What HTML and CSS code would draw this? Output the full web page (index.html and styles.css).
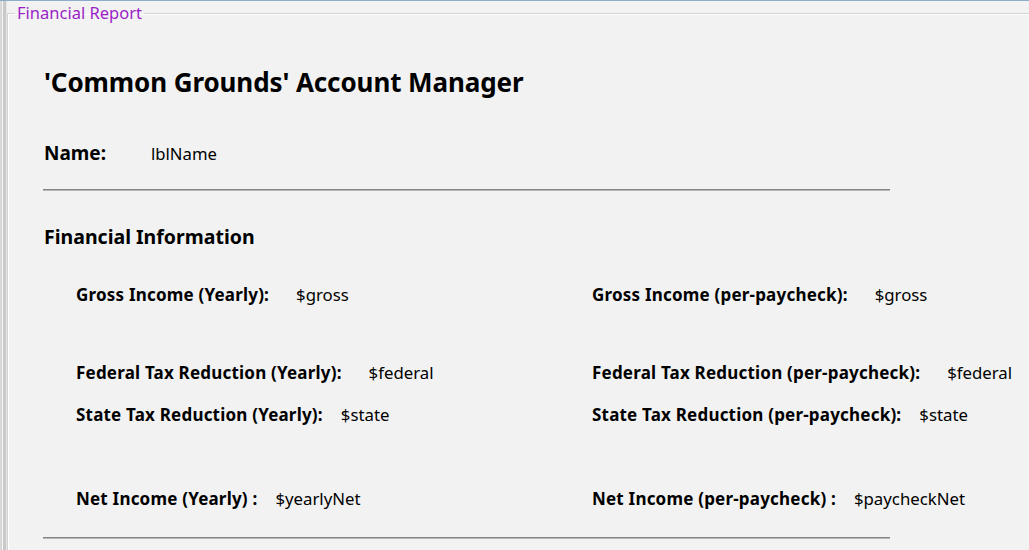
FILE: index.html
```html
<!DOCTYPE html>
<html>
<head>
<meta charset="utf-8">
<link rel="stylesheet" href="styles.css">
</head>
<body>
<div class="window">
  <div class="side-strip"></div>
  <fieldset class="groupbox">
    <legend class="groupbox-title">Financial Report</legend>
    <div class="content">
      <h1 class="title">'Common Grounds' Account Manager</h1>
      <div class="name-row">
        <span class="name-label">Name:</span>
        <span class="name-value">lblName</span>
      </div>
      <div class="rule"></div>
      <h2 class="section-title">Financial Information</h2>
      <div class="grid">
        <div class="item gap-wide"><span class="lbl">Gross Income (Yearly):</span><span class="val">$gross</span></div>
        <div class="item gap-wide"><span class="lbl">Gross Income (per-paycheck):</span><span class="val">$gross</span></div>
        <div class="item gap-wide row-federal"><span class="lbl">Federal Tax Reduction (Yearly):</span><span class="val">$federal</span></div>
        <div class="item gap-wide row-federal"><span class="lbl">Federal Tax Reduction (per-paycheck):</span><span class="val">$federal</span></div>
        <div class="item gap-narrow row-state"><span class="lbl">State Tax Reduction (Yearly):</span><span class="val">$state</span></div>
        <div class="item gap-narrow row-state"><span class="lbl">State Tax Reduction (per-paycheck):</span><span class="val">$state</span></div>
        <div class="item gap-narrow row-net"><span class="lbl">Net Income (Yearly) :</span><span class="val">$yearlyNet</span></div>
        <div class="item gap-narrow row-net"><span class="lbl">Net Income (per-paycheck) :</span><span class="val">$paycheckNet</span></div>
      </div>
      <div class="rule rule-bottom"></div>
    </div>
  </fieldset>
</div>
</body>
</html>
```

FILE: styles.css
```css
html, body {
  margin: 0;
  padding: 0;
  height: 100%;
  overflow: hidden;
}
body {
  background: #f2f2f2;
  font-family: "Noto Sans", "Open Sans", sans-serif;
  color: #000;
  border-top: 1px solid #8eaccc;
  box-sizing: border-box;
}
.window {
  display: flex;
  height: 100%;
}
.side-strip {
  width: 7px;
  flex: none;
  background: linear-gradient(to right,
    #dcdcdc 0, #d2d2d2 2px,
    #f6f6f6 2px, #f6f6f6 3px,
    #c9c9c9 3px, #c9c9c9 6px,
    #e6e6e6 6px, #e6e6e6 7px);
}
.groupbox {
  flex: 1;
  margin: 1px -20px 0 0;
  padding: 0;
  min-width: 0;
  border: 1px solid #d3d3d3;
  border-right: none;
  border-bottom: none;
  box-shadow: inset 1px 1px 0 #ffffff;
}
.groupbox-title {
  font-size: 16.5px;
  line-height: 22px;
  color: #9b1fc6;
  padding: 0 2px;
  margin-left: 7px;
}
.content {
  padding: 0 0 0 36px;
}
.title {
  margin: 41px 0 0 0;
  font-size: 26px;
  font-weight: 700;
  line-height: 34px;
  letter-spacing: -0.1px;
}
.name-row {
  margin-top: 42px;
  display: flex;
  align-items: baseline;
  line-height: 24px;
}
.name-label {
  font-size: 19px;
  font-weight: 700;
  width: 107px;
}
.name-value {
  font-size: 16.7px;
}
.rule {
  margin-top: 23px;
  margin-left: -1px;
  width: 847px;
  height: 0;
  border-top: 1px solid #858585;
  border-bottom: 1px solid #b5b5b5;
}
.section-title {
  margin: 33px 0 0 0;
  font-size: 19.5px;
  font-weight: 700;
  line-height: 26px;
}
.grid {
  display: grid;
  grid-template-columns: 516px 1fr;
  margin: 34px 0 0 32px;
}
.item {
  display: flex;
  align-items: baseline;
  line-height: 22px;
  white-space: nowrap;
}
.lbl {
  font-size: 17px;
  font-weight: 700;
  letter-spacing: 0.2px;
}
.val {
  font-size: 16.8px;
}
.gap-wide .val { margin-left: 27px; }
.gap-narrow .val { margin-left: 18px; }
.row-federal { margin-top: 56px; }
.row-state { margin-top: 20px; }
.row-net { margin-top: 62px; }
.rule-bottom {
  margin-top: 27px;
}
```
